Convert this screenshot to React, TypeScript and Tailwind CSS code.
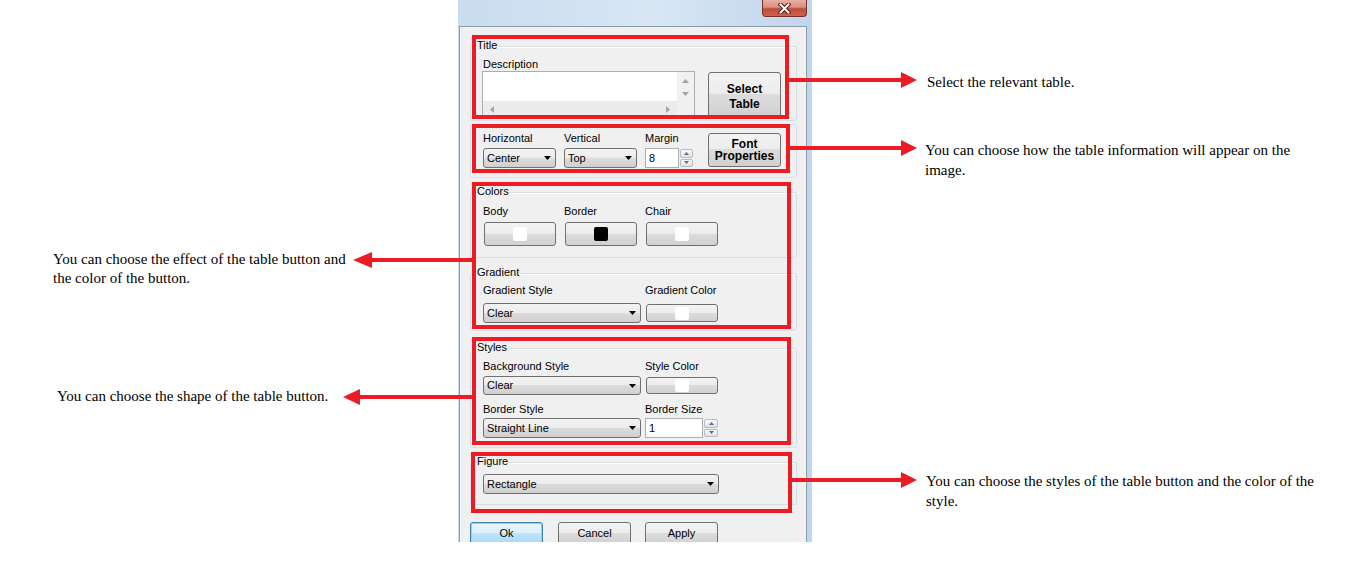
import type { ReactNode } from 'react'

const btnBg = 'bg-[linear-gradient(#f3f3f3_0%,#ececec_48%,#dddddd_48%,#d0d0d0_100%)]'

function Caret() {
  return (
    <svg width="7" height="4" viewBox="0 0 7 4" className="shrink-0">
      <path d="M0 0h7L3.5 4z" fill="#000" />
    </svg>
  )
}

function Combo({ value, className }: { value: string; className: string }) {
  return (
    <div
      className={`flex items-center justify-between rounded-[3px] border border-[#707070] pl-[3px] pr-[4px] ${btnBg} ${className}`}
    >
      <span className="leading-none">{value}</span>
      <Caret />
    </div>
  )
}

function ColorButton({ swatch, className }: { swatch: string; className: string }) {
  return (
    <div
      className={`ml-px flex w-[72px] items-center justify-center rounded-[3px] border border-[#707070] ${btnBg} ${className}`}
    >
      <div className={`w-[14px] rounded-[2px] ${swatch}`} />
    </div>
  )
}

function SpinArrow({ up }: { up?: boolean }) {
  return (
    <div className="flex flex-1 items-center justify-center rounded-[2px] border border-[#b5bcc7] bg-[linear-gradient(#f8f9fb,#dde2e8)]">
      <svg width="5" height="3" viewBox="0 0 5 3">
        <path d={up ? 'M0 3h5L2.5 0z' : 'M0 0h5L2.5 3z'} fill="#5b6d8c" />
      </svg>
    </div>
  )
}

function Spin({ value, inputClass, arrowClass }: { value: string; inputClass: string; arrowClass: string }) {
  return (
    <div className="flex h-[20px] gap-px">
      <div className={`flex items-center border border-[#abadb3] bg-white pl-[3px] ${inputClass}`}>{value}</div>
      <div className={`flex flex-col gap-px py-px ${arrowClass}`}>
        <SpinArrow up />
        <SpinArrow />
      </div>
    </div>
  )
}

function Group({ label, className, children }: { label?: string; className: string; children: ReactNode }) {
  return (
    <div className={`relative rounded-[3px] border border-[#d5dfe5] shadow-[inset_1px_1px_0_#ffffff] ${className}`}>
      {label && <span className="absolute left-[6px] top-[-8px] bg-[#f0f0f0] leading-[13px]">{label}</span>}
      {children}
    </div>
  )
}

function Tri({ d }: { d: string }) {
  return (
    <svg width="7" height="5" viewBox="0 0 7 5">
      <path d={d} fill="#a3a3a3" />
    </svg>
  )
}

function Description() {
  return (
    <div className="flex h-[47px] w-[213px] flex-col border border-[#abadb3] bg-white">
      <div className="flex flex-1">
        <div className="flex-1" />
        <div className="flex w-[17px] flex-col items-center justify-between bg-[#f1f1f1] pb-[4px] pt-[6px]">
          <Tri d="M0 5h7L3.5 1z" />
          <Tri d="M0 0h7L3.5 4z" />
        </div>
      </div>
      <div className="flex h-[16px]">
        <div className="flex flex-1 items-center justify-between bg-[#ececec] px-[7px]">
          <svg width="5" height="7" viewBox="0 0 5 7">
            <path d="M4 0v7L0 3.5z" fill="#a3a3a3" />
          </svg>
          <svg width="5" height="7" viewBox="0 0 5 7">
            <path d="M1 0v7L5 3.5z" fill="#a3a3a3" />
          </svg>
        </div>
        <div className="w-[17px] bg-[#f0f0f0]" />
      </div>
    </div>
  )
}

function Dialog() {
  return (
    <div className="flex h-[542px] w-[354px] shrink-0 flex-col overflow-hidden bg-[linear-gradient(to_right,#c9dcf0,#d8e6f4_55%,#c0d6ec)] pl-px pr-[5px] font-['Liberation_Sans',Arial,sans-serif] text-[11px] text-black">
      <div className="flex h-[26px] shrink-0 justify-end">
        <div className="flex h-[17px] w-[45px] items-center justify-center rounded-b-[4px] border border-t-0 border-[#7a2f26] bg-[linear-gradient(#e7b1a5_0%,#d98f7f_45%,#c24a3b_55%,#cc6450_100%)]">
          <svg width="13" height="11" viewBox="0 0 13 11">
            <path d="M2.5 1.5l8 8M10.5 1.5l-8 8" stroke="#4d1c16" strokeWidth="4" strokeLinecap="square" />
            <path d="M2.5 1.5l8 8M10.5 1.5l-8 8" stroke="#ffffff" strokeWidth="2" strokeLinecap="square" />
          </svg>
        </div>
      </div>

      <div className="flex-1 border border-b-0 border-[#8e9bab] bg-[#f0f0f0] pl-[10px] pr-[9px]">
        <Group label="Title" className="mt-[19px] h-[75px] pl-[11px] pt-[11px]">
          <div className="flex items-start">
            <div>
              <div className="ml-px leading-[13px]">Description</div>
              <Description />
            </div>
            <div
              className={`ml-[13px] mt-[14px] flex h-[46px] w-[73px] flex-col items-center justify-center rounded-[3px] border border-[#707070] pt-[3px] text-[12px] font-bold leading-[15px] ${btnBg}`}
            >
              <span>Select</span>
              <span>Table</span>
            </div>
          </div>
        </Group>

        <Group className="mt-[3px] h-[54px] pl-[12px] pt-[7px]">
          <div className="flex items-start">
            <div className="w-[81px]">
              <div className="leading-[13px]">Horizontal</div>
              <Combo value="Center" className="mt-[3px] h-[20px] w-[73px]" />
            </div>
            <div className="w-[81px]">
              <div className="leading-[13px]">Vertical</div>
              <Combo value="Top" className="mt-[3px] h-[20px] w-[73px]" />
            </div>
            <div className="w-[63px]">
              <div className="leading-[13px]">Margin</div>
              <div className="mt-[3px]">
                <Spin value="8" inputClass="w-[34px]" arrowClass="w-[13px]" />
              </div>
            </div>
            <div
              className={`mt-px flex h-[34px] w-[73px] flex-col items-center justify-center rounded-[3px] border border-[#707070] text-[12px] font-bold leading-[12px] ${btnBg}`}
            >
              <span>Font</span>
              <span>Properties</span>
            </div>
          </div>
        </Group>

        <Group label="Colors" className="mt-[14px] pb-[11px] pl-[12px] pt-[12px]">
          <div className="flex">
            <div className="w-[81px]">
              <div className="leading-[13px]">Body</div>
              <ColorButton swatch="h-[14px] bg-white" className="mt-[4px] h-[24px]" />
            </div>
            <div className="w-[81px]">
              <div className="leading-[13px]">Border</div>
              <ColorButton swatch="h-[14px] bg-black" className="mt-[4px] h-[24px]" />
            </div>
            <div className="w-[81px]">
              <div className="leading-[13px]">Chair</div>
              <ColorButton swatch="h-[14px] bg-white" className="mt-[4px] h-[24px]" />
            </div>
          </div>
        </Group>

        <Group label="Gradient" className="mt-[15px] pb-[7px] pl-[12px] pt-[10px]">
          <div className="flex">
            <div className="w-[162px]">
              <div className="leading-[13px]">Gradient Style</div>
              <Combo value="Clear" className="mt-[6px] h-[20px] w-[158px]" />
            </div>
            <div>
              <div className="leading-[13px]">Gradient Color</div>
              <ColorButton swatch="h-[13px] bg-white" className="mt-[7px] h-[18px]" />
            </div>
          </div>
        </Group>

        <Group label="Styles" className="mt-[17px] pb-[9px] pl-[12px] pt-[11px]">
          <div className="flex">
            <div className="w-[162px]">
              <div className="leading-[13px]">Background Style</div>
              <Combo value="Clear" className="mt-[3px] h-[19px] w-[158px]" />
            </div>
            <div>
              <div className="leading-[13px]">Style Color</div>
              <ColorButton swatch="h-[13px] bg-white" className="mt-[4px] h-[17px]" />
            </div>
          </div>
          <div className="mt-[8px] flex">
            <div className="w-[162px]">
              <div className="leading-[13px]">Border Style</div>
              <Combo value="Straight Line" className="mt-[2px] h-[20px] w-[158px]" />
            </div>
            <div>
              <div className="leading-[13px]">Border Size</div>
              <div className="mt-[2px]">
                <Spin value="1" inputClass="w-[58px]" arrowClass="w-[14px]" />
              </div>
            </div>
          </div>
        </Group>

        <Group label="Figure" className="mt-[14px] pb-[10px] pl-[12px] pt-[11px]">
          <Combo value="Rectangle" className="h-[20px] w-[236px]" />
        </Group>

        <div className="mt-[17px] flex">
          <div className="flex h-[23px] w-[73px] items-center justify-center rounded-[3px] border border-[#3c7fb1] bg-[linear-gradient(#eaf6fd_0%,#d9f0fc_48%,#bee6fd_48%,#a7d9f5_100%)] shadow-[inset_0_0_0_1px_#8fd2f5]">
            Ok
          </div>
          <div className={`ml-[15px] flex h-[23px] w-[73px] items-center justify-center rounded-[3px] border border-[#707070] ${btnBg}`}>
            Cancel
          </div>
          <div className={`ml-[14px] flex h-[23px] w-[73px] items-center justify-center rounded-[3px] border border-[#707070] ${btnBg}`}>
            Apply
          </div>
        </div>
      </div>
    </div>
  )
}

function Overlay() {
  const red = '#ed1c24'
  return (
    <svg
      className="pointer-events-none absolute left-0 top-0"
      width="1360"
      height="585"
      viewBox="0 0 1360 585"
    >
      <g fill="none" stroke={red} strokeWidth="4">
        <rect x="474" y="37" width="313" height="80" />
        <rect x="474" y="126" width="314" height="45" />
        <rect x="474" y="184" width="315" height="143" />
        <rect x="474" y="339" width="315" height="104" />
        <rect x="473" y="454" width="317" height="57" />
      </g>
      <g fill={red}>
        <rect x="789" y="78" width="114" height="4" />
        <path d="M901 72L917 80L901 88z" />
        <rect x="790" y="146" width="113" height="4" />
        <path d="M901 140L917 148L901 156z" />
        <rect x="792" y="478" width="111" height="4" />
        <path d="M901 472L917 480L901 488z" />
        <rect x="370" y="258" width="104" height="4" />
        <path d="M372 252L353 260L372 268z" />
        <rect x="358" y="395" width="116" height="4" />
        <path d="M360 389L343 397L360 405z" />
      </g>
    </svg>
  )
}

export default function App() {
  return (
    <div className="relative flex h-[585px] w-[1360px] overflow-hidden bg-white font-['Liberation_Serif','Times_New_Roman',serif] text-[15px] text-black">
      <div className="w-[458px] shrink-0 pt-[250px] leading-[19px]">
        <p className="ml-[53px] whitespace-nowrap">
          You can choose the effect of the table button and
          <br />
          the color of the button.
        </p>
        <p className="ml-[57px] mt-[99px] whitespace-nowrap">You can choose the shape of the table button.</p>
      </div>

      <Dialog />

      <div className="flex-1 pt-[72px] leading-[20px]">
        <p className="ml-[115px] whitespace-nowrap">Select the relevant table.</p>
        <p className="ml-[113px] mt-[48px] whitespace-nowrap">
          You can choose how the table information will appear on the
          <br />
          image.
        </p>
        <p className="ml-[114px] mt-[291px] whitespace-nowrap">
          You can choose the styles of the table button and the color of the
          <br />
          style.
        </p>
      </div>

      <Overlay />
    </div>
  )
}
